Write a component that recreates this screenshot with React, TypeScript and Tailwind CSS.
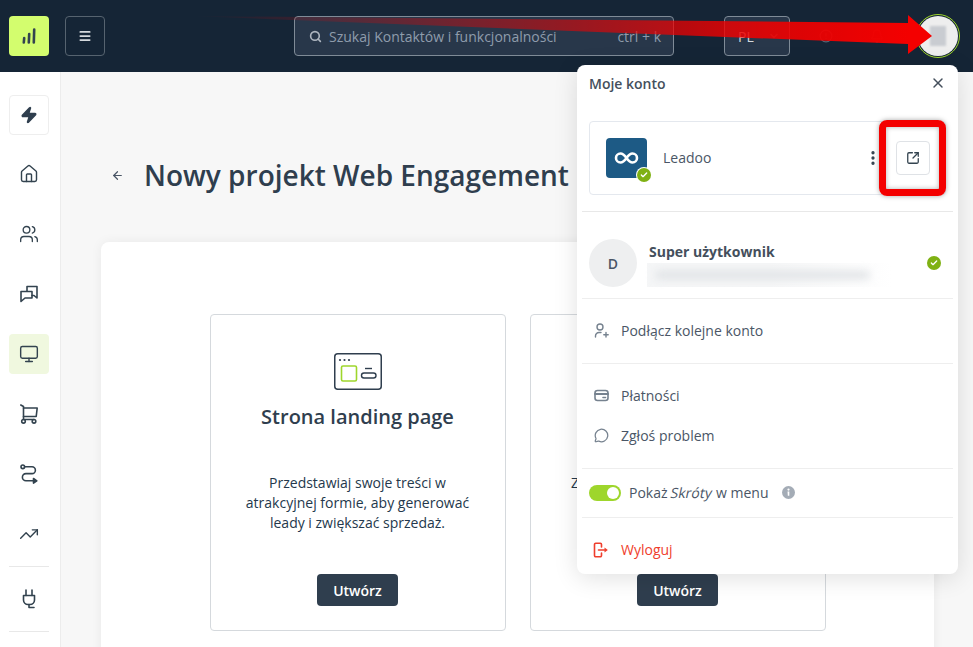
import React from "react";
import {
  ArrowLeft,
  Bell,
  ChevronDown,
  CircleAlert,
  EllipsisVertical,
  House,
  Menu,
  MessageCircle,
  Monitor,
  Search,
  SquareArrowOutUpRight,
  TrendingUp,
  Users,
  X,
  Zap,
  Check,
} from "lucide-react";

const CheckBadge = ({ className }: { className: string }) => (
  <span className={`flex items-center justify-center rounded-full bg-[#7fb113] ${className}`}>
    <Check size={8} strokeWidth={4} className="text-white" />
  </span>
);

const LandingIcon = () => (
  <svg width="48" height="38" viewBox="0 0 48 38" fill="none">
    <rect x="0.75" y="0.75" width="46.5" height="35.5" rx="3" stroke="#2f3e4e" strokeWidth="1.5" />
    <circle cx="6" cy="7" r="1.1" fill="#2f3e4e" />
    <circle cx="10.5" cy="7" r="1.1" fill="#2f3e4e" />
    <circle cx="15" cy="7" r="1.1" fill="#2f3e4e" />
    <rect x="7.5" y="13" width="15" height="15" rx="1.5" stroke="#9ed62c" strokeWidth="1.6" />
    <path d="M31 15.5h7" stroke="#2f3e4e" strokeWidth="1.4" />
    <rect x="27.5" y="20" width="14.5" height="5" rx="2.5" stroke="#2f3e4e" strokeWidth="1.4" />
  </svg>
);

const SideSvg = ({ children }: { children: React.ReactNode }) => (
  <svg width="18" height="20" viewBox="0 0 18 20" fill="none" stroke="#33434f" strokeWidth="1.6" strokeLinecap="round" strokeLinejoin="round">
    {children}
  </svg>
);

const ChatIcon = () => (
  <SideSvg>
    <path d="M7 7V2.500h10V14l-3-2.500h-2" />
    <path d="M1 7.500h11v6.500H5l-4 3.500z" />
  </SideSvg>
);

const CartIcon = () => (
  <SideSvg>
    <path d="M0.800 1L3.500 2.500V15.500H14" />
    <path d="M3.500 4H17.200L16.200 12.500H3.500" />
    <circle cx="3.500" cy="17.300" r="1.800" />
    <circle cx="14" cy="17.300" r="1.800" />
  </SideSvg>
);

const RouteIcon = () => (
  <SideSvg>
    <circle cx="2.800" cy="2.800" r="1.800" />
    <path d="M4.600 2.800H12a3.400 3.400 0 0 1 0 6.800H6a3.600 3.600 0 0 0 0 7.200h10" />
    <path d="M13.500 14.500l3.300 2.300-3.300 2.300z" fill="#33434f" />
  </SideSvg>
);

const PlugIcon = () => (
  <SideSvg>
    <path d="M6 1v5.500M12 1v5.500" />
    <path d="M3.500 6.500h11v4.500a4.500 4.500 0 0 1-4.500 4.500H8A4.500 4.500 0 0 1 3.500 11z" />
    <path d="M9 15.500v3h5" />
  </SideSvg>
);

const ProjectCard = ({ title, lines, icon }: { title: string; lines: string[]; icon: React.ReactNode }) => (
  <div className="flex h-[317px] w-[296px] flex-col items-center rounded border border-[#d5d9dd] pt-[38px]">
    <div className="h-[38px]">{icon}</div>
    <h3 className="mt-[12px] h-[28px] text-[20px] leading-[28px] font-semibold text-[#2f3e4e]">{title}</h3>
    <div className="mt-[42px] text-center text-[14px] leading-[20px] whitespace-nowrap text-[#24384c]">
      {lines.map((line) => (
        <p key={line}>{line}</p>
      ))}
    </div>
    <button className="mt-[41px] h-[32px] w-[81px] rounded bg-[#2f3e4e] text-[14px] font-semibold text-white">Utwórz</button>
  </div>
);

const sideItems = [
  { icon: <House size={20} strokeWidth={1.7} className="text-[#33434f]" />, active: false },
  { icon: <Users size={20} strokeWidth={1.6} className="text-[#33434f]" />, active: false },
  { icon: <ChatIcon />, active: false },
  { icon: <Monitor size={20} strokeWidth={1.7} className="text-[#33434f]" />, active: true },
  { icon: <CartIcon />, active: false },
  { icon: <RouteIcon />, active: false },
  { icon: <TrendingUp size={20} strokeWidth={1.7} className="text-[#33434f]" />, active: false },
];

const MenuRow = ({ icon, label }: { icon: React.ReactNode; label: string }) => (
  <div className="flex h-[40px] items-center gap-[12px] pl-[11px] text-[14px] text-[#4a5666]">
    <span className="flex w-[16px] justify-center text-[#76828f]">{icon}</span>
    {label}
  </div>
);

export default function App() {
  return (
    <div
      className="relative flex h-[647px] w-[973px] flex-col overflow-hidden bg-[#f7f7f7]"
      style={{ fontFamily: '"Open Sans", "Noto Sans", sans-serif' }}
    >
      <header className="flex h-[72px] shrink-0 items-center bg-[#152536]">
        <div className="ml-[9px] flex h-[40px] w-[40px] items-center justify-center rounded bg-[#d3fd6e]">
          <svg width="14" height="16" viewBox="0 0 14 16" fill="none" stroke="#33434f" strokeWidth="2.6" strokeLinecap="round">
            <path d="M1.800 14.500L2.200 10" />
            <path d="M6.800 14.500L7.200 6" />
            <path d="M11.800 14.500L12.200 1.500" />
          </svg>
        </div>
        <button className="ml-[16px] flex h-[40px] w-[40px] items-center justify-center rounded border border-[#56636f] text-[#d5d9dd]">
          <Menu size={14} strokeWidth={3} />
        </button>
        <div className="ml-[189px] flex h-[40px] w-[380px] items-center rounded border border-[#7f8b97] bg-[#28374a] pr-[12px] pl-[14px] text-[14px] text-[#8f9cac]">
          <Search size={13} strokeWidth={3} className="text-[#aeb6c0]" />
          <span className="ml-[7px] flex-1">Szukaj Kontaktów i funkcjonalności</span>
          <span>ctrl + k</span>
        </div>
        <div className="ml-[50px] flex h-[40px] w-[66px] items-center gap-[14px] rounded border border-[#7f8b97] bg-[#28374a] pl-[13px] text-[14px] text-[#d5d9dd]">
          PL
          <ChevronDown size={12} strokeWidth={3} className="text-[#6d7a88]" />
        </div>
        <CircleAlert size={14} className="ml-[29px] text-[#5a6775]" />
        <Bell size={14} className="ml-[37px] text-[#5a6775]" />
        <div className="ml-[32px] flex h-[44px] w-[44px] items-center justify-center rounded-full border border-[#9ed62c] bg-[#152536]">
          <div className="flex h-[40px] w-[40px] items-center justify-center rounded-full bg-[#eeeeee]">
            <div className="h-[20px] w-[16px] bg-[#c9ccd1] blur-[1px]" />
          </div>
        </div>
      </header>

      <div className="flex min-h-0 flex-1">
        <aside className="flex w-[61px] shrink-0 flex-col items-center border-r border-[#ececec] bg-white pt-[23px] pr-[3px]">
          <div className="flex h-[40px] w-[40px] items-center justify-center rounded border border-[#eeeeee]">
            <Zap size={18} className="fill-[#2f3e4e] text-[#2f3e4e]" />
          </div>
          <div className="mt-[19px] flex flex-col gap-[20px]">
            {sideItems.map(({ icon, active }, i) => (
              <div key={i} className={`flex h-[40px] w-[40px] items-center justify-center rounded ${active ? "bg-[#f0f8df]" : ""}`}>
                {icon}
              </div>
            ))}
          </div>
          <div className="mt-[12px] h-px w-[40px] bg-[#e8e8e8]" />
          <div className="flex h-[64px] items-center justify-center">
            <PlugIcon />
          </div>
          <div className="h-px w-[40px] bg-[#e8e8e8]" />
        </aside>

        <main className="min-w-0 flex-1 pt-[83px] pr-[39px] pl-[40px]">
          <div className="flex h-[40px] items-center">
            <ArrowLeft size={13} strokeWidth={2.2} className="ml-[10px] text-[#4a5666]" />
            <h1 className="ml-[20px] text-[28px] leading-[38px] font-semibold whitespace-nowrap text-[#2f3e4e]">Nowy projekt Web Engagement</h1>
          </div>
          <div className="mt-[47px] flex h-[500px] justify-center gap-[24px] rounded-t-lg bg-white pt-[72px] shadow-[0_0_12px_rgba(0,0,0,0.06)]">
            <ProjectCard
              title="Strona landing page"
              icon={<LandingIcon />}
              lines={["Przedstawiaj swoje treści w", "atrakcyjnej formie, aby generować", "leady i zwiększać sprzedaż."]}
            />
            <ProjectCard title="" icon={null} lines={["Zaskakuj odwiedzających swoimi", "ofertami i zbieraj nowe", "kontakty."]} />
          </div>
        </main>
      </div>

      {/* konto */}
      <div className="absolute top-[65px] left-[577px] h-[509px] w-[381px] rounded-lg bg-white shadow-[0_4px_24px_rgba(0,0,0,0.12)]">
        <div className="flex h-[36px] items-center justify-between pr-[12px] pl-[12px]">
          <span className="text-[14px] font-semibold text-[#444f5c]">Moje konto</span>
          <X size={16} strokeWidth={2.2} className="text-[#444f5c]" />
        </div>
        <div className="mx-[12px] mt-[20px] flex h-[74px] items-center rounded border border-[#e4e8ee] pl-[16px]">
          <div className="relative h-[40px] w-[41px] rounded bg-[#1d5a85]">
            <svg width="41" height="40" viewBox="0 0 41 40" fill="none" stroke="white" strokeWidth="2.6">
              <path d="M20.500 20c-2.500-3.500-4-4.500-6-4.500a4.500 4.500 0 0 0 0 9c2 0 3.500-1 6-4.500s4-4.500 6-4.500a4.500 4.500 0 0 1 0 9c-2 0-3.500-1-6-4.500z" />
            </svg>
            <CheckBadge className="absolute right-[-4px] bottom-[-4px] h-[14px] w-[14px] ring-1 ring-white" />
          </div>
          <span className="ml-[16px] flex-1 pb-[2px] text-[14px] text-[#4a5666]">Leadoo</span>
          <EllipsisVertical size={18} strokeWidth={2.4} className="mr-[14px] text-[#33434f]" />
          <div className="mr-[15px] flex h-[34px] w-[34px] items-center justify-center rounded border border-[#dfe2e6]">
            <SquareArrowOutUpRight size={14} strokeWidth={2.2} className="text-[#33434f]" />
          </div>
        </div>
        <div className="mx-[5px] mt-[16px] h-px bg-[#e8e8e8]" />
        <div className="mx-[5px] flex h-[87px] items-start border-b border-[#eeeeee] pt-[27px] pl-[7px]">
          <div className="flex h-[48px] w-[48px] items-center justify-center rounded-full bg-[#eeeff0] text-[14px] font-semibold text-[#4a5666]">D</div>
          <div className="mt-[4px] ml-[12px] w-[278px]">
            <div className="text-[14px] leading-[18px] font-bold text-[#444f5c]">Super użytkownik</div>
            <div className="mt-[2px] -ml-[2px] h-[24px] w-[245px] bg-linear-to-r from-[#f5f6f7] via-[#f5f6f7] to-white pt-[8px] pl-[8px]">
              <div className="h-[8px] w-[215px] rounded-full bg-[#dfe2e5] blur-[4px]" />
            </div>
          </div>
          <CheckBadge className="mt-[17px] h-[14px] w-[14px]" />
        </div>
        <div className="mx-[5px] flex h-[65px] items-center border-b border-[#eeeeee] pb-[1px]">
          <MenuRow
            icon={
              <svg width="15" height="15" viewBox="0 0 15 15" fill="none" stroke="currentColor" strokeWidth="1.400" strokeLinecap="round">
                <circle cx="6" cy="4" r="3" />
                <path d="M1.500 14v-1a3.500 3.500 0 0 1 3.500-3.500h2" />
                <path d="M12 9.500v4.500M9.800 11.800h4.400" />
              </svg>
            }
            label="Podłącz kolejne konto"
          />
        </div>
        <div className="mx-[5px] flex h-[105px] flex-col justify-center border-b border-[#eeeeee] pb-[2px]">
          <MenuRow
            icon={
              <svg width="15" height="13" viewBox="0 0 15 13" fill="none" stroke="currentColor" strokeWidth="1.600" strokeLinecap="round">
                <rect x="1" y="1.500" width="13" height="10" rx="2.500" />
                <path d="M1 5h13" strokeWidth="2" />
                <path d="M9 8.500h2.500" />
              </svg>
            }
            label="Płatności"
          />
          <MenuRow icon={<MessageCircle size={15} strokeWidth={2} />} label="Zgłoś problem" />
        </div>
        <div className="mx-[5px] flex h-[49px] items-center border-b border-[#eeeeee] pb-[1px] pl-[7px] text-[14px] text-[#4a5666]">
          <span className="flex h-[16px] w-[32px] items-center justify-end rounded-full bg-[#9ed62c] pr-[2px]">
            <span className="h-[12px] w-[12px] rounded-full bg-white" />
          </span>
          <span className="ml-[8px]">
            Pokaż <span className="inline-block -skew-x-12">Skróty</span> w menu
          </span>
          <svg className="ml-[13px]" width="13" height="13" viewBox="0 0 13 13">
            <circle cx="6.500" cy="6.500" r="6.500" fill="#a4acb6" />
            <circle cx="6.500" cy="3.600" r="1.100" fill="white" />
            <path d="M5.500 5.600h1.800v4.200h-1.500z" fill="white" />
          </svg>
        </div>
        <div className="mx-[5px] flex h-[63px] items-center pl-[11px] text-[14px] text-[#ef3e2d]">
          <svg width="16" height="16" viewBox="0 0 16 16" fill="none" stroke="currentColor" strokeWidth="1.600" strokeLinecap="round" strokeLinejoin="round">
            <path d="M8.500 5V2.500A1.200 1.200 0 0 0 7.300 1.300H2.700a1.200 1.200 0 0 0-1.200 1.200v11a1.200 1.200 0 0 0 1.200 1.200h4.600a1.200 1.200 0 0 0 1.200-1.200V11" />
            <path d="M5.500 8h6" />
            <path d="M11.500 5.500L14.800 8l-3.300 2.500z" fill="currentColor" stroke="none" />
          </svg>
          <span className="ml-[12px]">Wyloguj</span>
        </div>
      </div>

      {/* adnotacje */}
      <div className="absolute top-[120px] left-[879px] h-[76px] w-[67px] rounded-lg border-[7px] border-[#f40000] shadow-[0_0_5px_rgba(0,0,0,0.35),inset_0_0_5px_rgba(0,0,0,0.3)]" />
      <svg className="absolute top-0 left-0" width="973" height="72" viewBox="0 0 973 72">
        <defs>
          <linearGradient id="strzalka" x1="190" y1="0" x2="910" y2="0" gradientUnits="userSpaceOnUse">
            <stop offset="0" stopColor="#f00000" stopOpacity="0" />
            <stop offset="0.45" stopColor="#f00000" stopOpacity="0.45" />
            <stop offset="0.8" stopColor="#f00000" stopOpacity="0.88" />
            <stop offset="1" stopColor="#f40000" />
          </linearGradient>
        </defs>
        <path d="M190 16L908 23V15L932 36L908 54V44Z" fill="url(#strzalka)" />
      </svg>
    </div>
  );
}
